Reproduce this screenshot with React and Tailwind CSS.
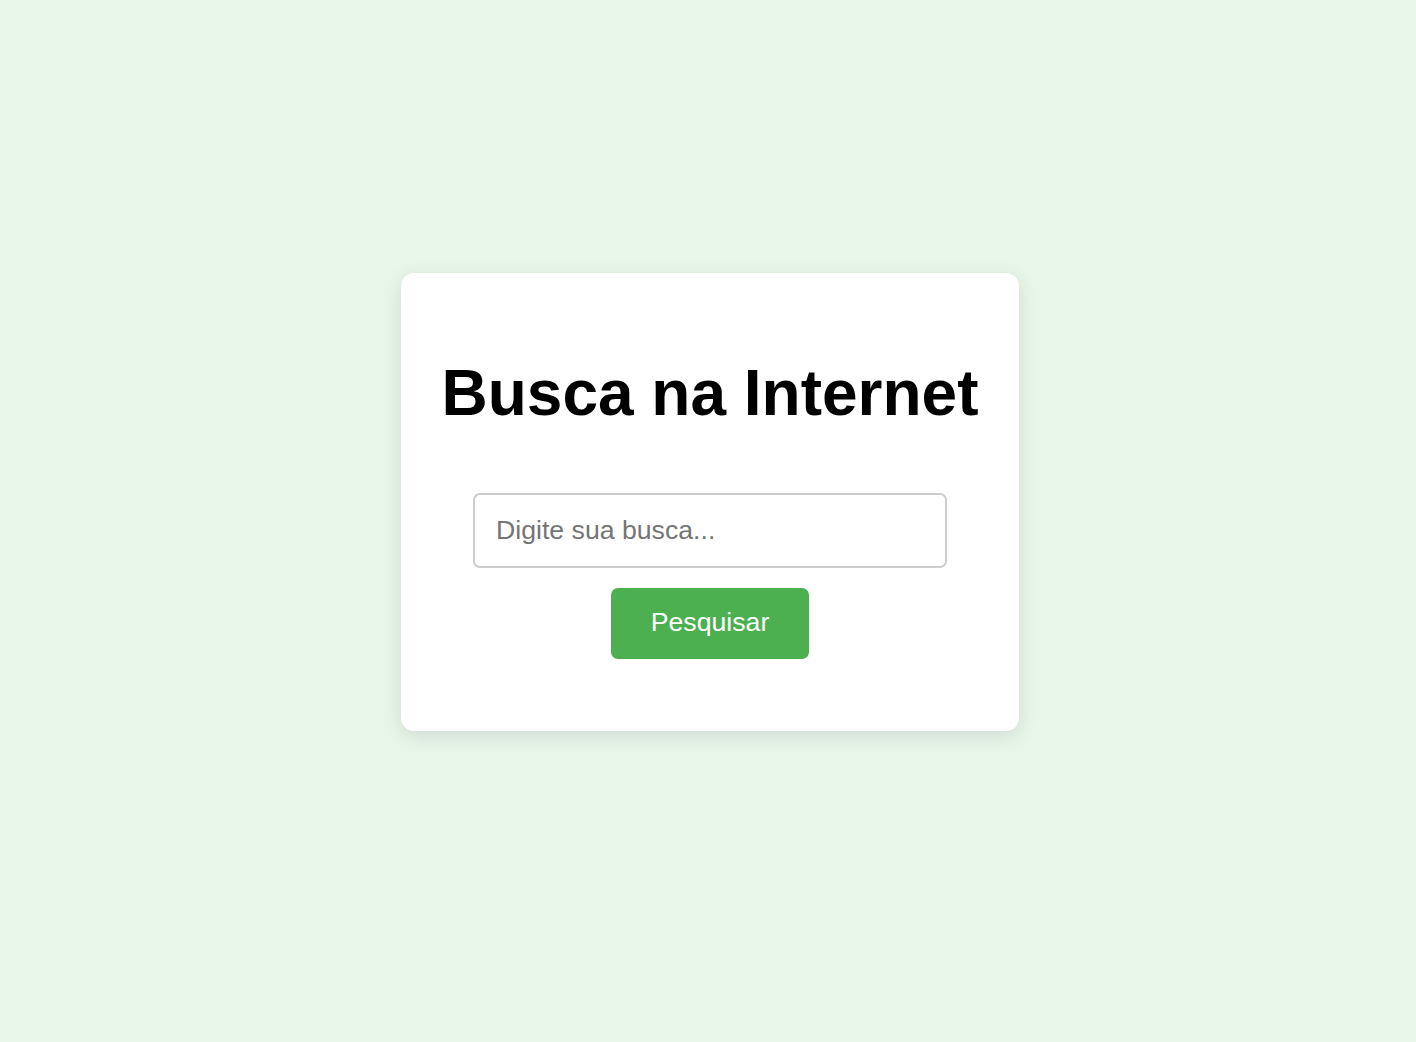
import React from 'react';

export default function App() {
    return (
        <div
            className="min-h-screen w-full bg-[#e8f5e9]"
            style={{ fontFamily: '"Liberation Sans", Arial, sans-serif' }}
        >
            <div className="flex h-[1004px] items-center justify-center pl-[4px]">
                <div className="rounded-[13px] bg-white px-[40px] pt-[40px] pb-[72px] text-center shadow-[0_5px_20px_rgba(0,0,0,0.1)]">
                    <h1 className="mt-[43px] mb-[63px] text-[64px] leading-[74px] font-bold text-black">
                        Busca na Internet
                    </h1>
                    <form
                        className="flex flex-col items-center"
                        onSubmit={(e) => e.preventDefault()}
                    >
                        <input
                            type="text"
                            placeholder="Digite sua busca..."
                            className="h-[75px] w-[474px] rounded-[7px] border-2 border-[#cccccc] px-[21px] pb-[1px] text-[26.67px] text-black outline-none placeholder:text-[#757575]"
                        />
                        <button
                            type="submit"
                            className="mt-[20px] h-[71px] rounded-[7px] bg-[#4caf50] px-[40px] pb-[3px] text-[26.67px] text-white"
                        >
                            Pesquisar
                        </button>
                    </form>
                </div>
            </div>
        </div>
    );
}
